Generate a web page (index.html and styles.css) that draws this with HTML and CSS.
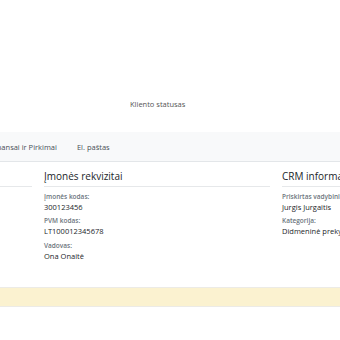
FILE: index.html
```
<!DOCTYPE html>
<html lang="lt">
<head>
  <meta charset="UTF-8" />
  <meta name="viewport" content="width=device-width, initial-scale=1.0" />
  <title>Klientas</title>
  <link rel="stylesheet" href="styles.css">
</head>
<body>
  <div class="page">
    <div class="status">Kliento statusas</div>

    <div class="tabs">
      <span class="tab tab-cut">Finansai ir Pirkimai</span>
      <span class="tab">El. paštas</span>
    </div>

    <div class="columns">
      <div class="col">
        <h3>Kontaktai</h3>
        <div class="label">Tel.:</div>
        <div class="value">+370</div>
      </div>
      <div class="col">
        <h3>Įmonės rekvizitai</h3>
        <div class="label">Įmonės kodas:</div>
        <div class="value">300123456</div>
        <div class="label">PVM kodas:</div>
        <div class="value">LT100012345678</div>
        <div class="label">Vadovas:</div>
        <div class="value">Ona Onaitė</div>
      </div>
      <div class="col">
        <h3>CRM informacija</h3>
        <div class="label">Priskirtas vadybininkas:</div>
        <div class="value">Jurgis Jurgaitis</div>
        <div class="label">Kategorija:</div>
        <div class="value">Didmeninė prekyba</div>
      </div>
    </div>

    <div class="notice"></div>
  </div>
</body>
</html>
```

FILE: styles.css
```
body {
  margin: 0;
  font-family: 'Open Sans', sans-serif;
  color: #212529;
  overflow: hidden;
  background: #fff;
}
.page {
  width: 340px;
}
.status {
  height: 132px;
  padding-left: 130px;
  box-sizing: border-box;
  padding-top: 99px;
  font-size: 7.5px;
  color: #555;
}
.tabs {
  display: flex;
  align-items: center;
  height: 29px;
  background: #f8f9fa;
  border-bottom: 1px solid #e3e6e9;
  font-size: 7.5px;
  color: #495057;
  white-space: nowrap;
}
.tab {
  padding: 0 10px;
}
.tab-cut {
  margin-left: -19px;
}
.columns {
  display: grid;
  grid-template-columns: 226px 226px 226px;
  gap: 12px;
  margin-left: -194px;
  padding-top: 7px;
}
.col h3 {
  margin: 0 0 4px;
  font-size: 10px;
  font-weight: 400;
  padding-bottom: 3px;
  border-bottom: 1px solid #e6e8ea;
  white-space: nowrap;
}
.label {
  font-size: 6.5px;
  font-weight: 600;
  color: #6c757d;
  margin-top: 4.5px;
  white-space: nowrap;
}
.value {
  font-size: 7.5px;
  margin-top: 1px;
  white-space: nowrap;
}
.notice {
  margin-top: 26px;
  height: 18px;
  background: #fbf2d0;
  border-top: 1px solid #ecebe6;
  border-bottom: 1px solid #ecebe6;
}
```
